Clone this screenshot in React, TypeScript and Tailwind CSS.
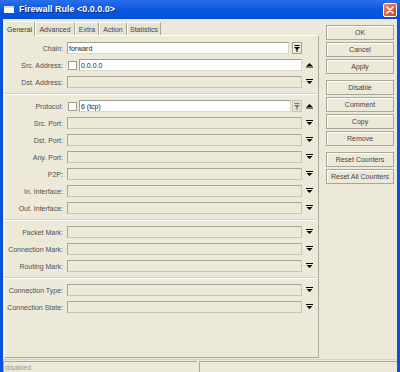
import React from 'react'

const FONT = { fontFamily: '"Liberation Sans", Arial, sans-serif' }

type Arrow = 'up' | 'down' | 'none'

type Row =
  | { kind: 'sep' }
  | { kind: 'field'; label: string; value?: string; enabled?: boolean; check?: boolean; arrow: Arrow; combo?: boolean; chain?: boolean }

const ROWS: Row[] = [
  { kind: 'field', label: 'Chain:', value: 'forward', enabled: true, arrow: 'none', chain: true },
  { kind: 'field', label: 'Src. Address:', value: '0.0.0.0', enabled: true, check: true, arrow: 'up' },
  { kind: 'field', label: 'Dst. Address:', arrow: 'down' },
  { kind: 'sep' },
  { kind: 'field', label: 'Protocol:', value: '6 (tcp)', enabled: true, check: true, arrow: 'up', combo: true },
  { kind: 'field', label: 'Src. Port:', arrow: 'down' },
  { kind: 'field', label: 'Dst. Port:', arrow: 'down' },
  { kind: 'field', label: 'Any. Port:', arrow: 'down' },
  { kind: 'field', label: 'P2P:', arrow: 'down' },
  { kind: 'field', label: 'In. Interface:', arrow: 'down' },
  { kind: 'field', label: 'Out. Interface:', arrow: 'down' },
  { kind: 'sep' },
  { kind: 'field', label: 'Packet Mark:', arrow: 'down' },
  { kind: 'field', label: 'Connection Mark:', arrow: 'down' },
  { kind: 'field', label: 'Routing Mark:', arrow: 'down' },
  { kind: 'sep' },
  { kind: 'field', label: 'Connection Type:', arrow: 'down' },
  { kind: 'field', label: 'Connection State:', arrow: 'down' },
]

const TABS = [
  { label: 'General', w: 'w-[31px]' },
  { label: 'Advanced', w: 'w-[40px]' },
  { label: 'Extra', w: 'w-[24px]' },
  { label: 'Action', w: 'w-[28px]' },
  { label: 'Statistics', w: 'w-[34px]' },
]

const BUTTON_GROUPS = [
  ['OK', 'Cancel', 'Apply'],
  ['Disable', 'Comment', 'Copy', 'Remove'],
  ['Reset Counters', 'Reset All Counters'],
]

function ArrowIcon({ dir, color = '#000' }: { dir: 'up' | 'down' | 'combo'; color?: string }) {
  if (dir === 'up') {
    return (
      <svg width="7" height="6" viewBox="0 0 7 6">
        <path d="M3.5 1 L6.5 4 L0.5 4 Z" fill={color} />
        <rect x="0" y="4.5" width="7" height="1" fill={color} />
      </svg>
    )
  }
  if (dir === 'down') {
    return (
      <svg width="7" height="6" viewBox="0 0 7 6">
        <rect x="0" y="0" width="7" height="1" fill={color} />
        <path d="M0.5 2 L6.5 2 L3.5 5 Z" fill={color} />
      </svg>
    )
  }
  return (
    <svg width="6" height="7" viewBox="0 0 6 7">
      <rect x="0.5" y="0" width="5" height="1" fill={color} />
      <path d="M0 2 L6 2 L3 5 Z" fill={color} />
      <rect x="2.5" y="4" width="1" height="3" fill={color} />
    </svg>
  )
}

function Field({ row }: { row: Extract<Row, { kind: 'field' }> }) {
  const box = row.enabled
    ? 'bg-white border-t-[#A19E92] border-l-[#A19E92] border-b-[#D8D5C9] border-r-[#D8D5C9]'
    : 'bg-[#ECE9D8] border-t-[#A8A597] border-l-[#A8A597] border-b-[#C9C6B9] border-r-[#C9C6B9]'
  return (
    <div className="flex h-[12px] items-center">
      <div className="w-[58px] shrink-0 whitespace-nowrap text-right text-[7px] leading-none text-[#505050]">
        {row.label}
      </div>
      <div className="ml-[4px] flex h-full flex-1 items-center">
        {row.check && (
          <div className="mr-[2px] ml-[1px] h-[9px] w-[9px] shrink-0 border border-[#9D9A8E] bg-white" />
        )}
        <div className={`flex h-full flex-1 items-center border px-[1px] text-[7px] leading-none text-[#222] ${box}`}>
          {row.value}
        </div>
        {row.combo && (
          <div className="ml-[1px] flex h-full w-[10px] items-center justify-center border border-[#C7C4B7] bg-[#E4E1D3]">
            <ArrowIcon dir="combo" color="#777" />
          </div>
        )}
        {row.chain && (
          <div className="ml-[3px] flex h-[12px] w-[10px] items-center justify-center border border-[#A19E92] bg-[#ECE9D8] shadow-[inset_1px_1px_0_#fff]">
            <ArrowIcon dir="combo" />
          </div>
        )}
      </div>
      <div className="flex w-[14px] shrink-0 items-center justify-center">
        {row.arrow !== 'none' && <ArrowIcon dir={row.arrow} />}
      </div>
    </div>
  )
}

export default function App() {
  return (
    <div className="flex h-[372px] w-[400px] flex-col bg-[#0A52DC]" style={FONT}>
      {/* Title bar */}
      <div className="flex h-[19px] shrink-0 items-center bg-gradient-to-b from-[#2A6FEA] via-[#0A58E0] to-[#0650D6] pl-[4px] pr-[3px]">
        <div className="h-[7px] w-[10px] border-t-[2px] border-[#cfe0ff] bg-white" />
        <span className="ml-[5px] text-[9px] font-bold leading-none text-white [text-shadow:1px_1px_0_#0a2a80]">
          Firewall Rule &lt;0.0.0.0&gt;
        </span>
        <div className="ml-auto flex h-[14px] w-[14px] items-center justify-center rounded-[2px] border border-white bg-gradient-to-br from-[#F0865A] to-[#D2401C]">
          <svg width="8" height="8" viewBox="0 0 8 8">
            <path d="M1 1 L7 7 M7 1 L1 7" stroke="#fff" strokeWidth="1.6" strokeLinecap="round" />
          </svg>
        </div>
      </div>

      {/* Client area */}
      <div className="mx-[3px] mb-[1px] flex flex-1 flex-col bg-[#ECE9D8]">
        <div className="flex flex-1">
          {/* Tabs + panel */}
          <div className="ml-[1px] flex w-[315px] flex-col pt-[1px]">
            <div className="relative z-10 flex h-[15px] items-end">
              {TABS.map((t, i) =>
                i === 0 ? (
                  <div
                    key={t.label}
                    className={`${t.w} -mb-[1px] flex h-[15px] items-center justify-center border-t border-l border-r border-t-white border-l-white border-r-[#ACA899] bg-[#ECE9D8] text-[7px] leading-none text-[#333]`}
                  >
                    {t.label}
                  </div>
                ) : (
                  <div
                    key={t.label}
                    className={`${t.w} flex h-[13px] items-center justify-center border-t border-l border-r border-t-white border-l-white border-r-[#ACA899] bg-[#E6E3D4] text-[7px] leading-none text-[#444]`}
                  >
                    {t.label}
                  </div>
                ),
              )}
            </div>
            <div className="flex h-[323px] flex-col gap-[5px] border border-t-white border-l-white border-b-[#ACA899] border-r-[#ACA899] pt-[6px] pr-[2px]">
              {ROWS.map((row, i) =>
                row.kind === 'sep' ? (
                  <div key={i} className="h-[2px] border-t border-b border-t-[#D2CFC1] border-b-white" />
                ) : (
                  <Field key={i} row={row} />
                ),
              )}
            </div>
          </div>

          {/* Buttons */}
          <div className="ml-[7px] flex w-[68px] flex-col gap-[6px] pt-[6px]">
            {BUTTON_GROUPS.map((group, gi) => (
              <div key={gi} className="flex flex-col gap-[2px]">
                {group.map((b) => (
                  <div
                    key={b}
                    className="flex h-[15px] items-center justify-center border border-[#A9A699] bg-[#ECE9D8] text-[7px] leading-none text-[#444] shadow-[inset_1px_1px_0_#fff]"
                  >
                    {b}
                  </div>
                ))}
              </div>
            ))}
          </div>
        </div>

        {/* Status bar */}
        <div className="mt-[1px] flex h-[13px] gap-[2px] border-t border-[#D6D3C6] pt-[1px]">
          <div className="flex w-[194px] items-center border-t border-l border-t-[#ACA899] border-l-[#ACA899] pl-[1px] text-[7px] leading-none text-[#9a9a9a]">
            disabled
          </div>
          <div className="flex-1 border-t border-l border-t-[#ACA899] border-l-[#ACA899]" />
        </div>
      </div>
    </div>
  )
}
